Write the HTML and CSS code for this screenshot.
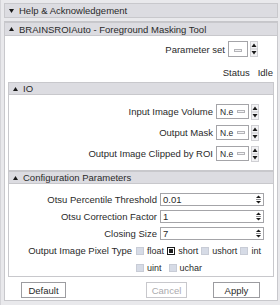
FILE: index.html
```html
<!DOCTYPE html>
<html>
<head>
	<title>BRAINSROIAuto</title>
<link rel="stylesheet" href="styles.css">
</head>
<body>
	<div class="frame">
		<div class="section collapsed">
			<div class="header">
				<svg class="arrow" width="5" height="4" viewBox="0 0 5 4"><path d="M0 0 L5 0 L2.5 4Z"/></svg>
				Help &amp; Acknowledgement
			</div>
		</div>
		<div class="section main">
			<div class="header">
				<svg class="arrow" width="5" height="4" viewBox="0 0 5 4"><path d="M0 4 L5 4 L2.5 0Z"/></svg>
				BRAINSROIAuto - Foreground Masking Tool
			</div>
			<div class="body">
				<div class="row param-row">
					<span class="label">Parameter set</span>
					<span class="combo small"><span class="dash"></span></span>
					<svg class="spin" width="8" height="16" viewBox="0 0 8 16"><rect x="0.5" y="0.5" width="7" height="15" fill="#f2f2f4" stroke="#d0d0d4"/><line x1="0" y1="8" x2="8" y2="8" stroke="#c8c8cc"/><path d="M1.5 6 L6.5 6 L4 2.5Z"/><path d="M1.5 10 L6.5 10 L4 13.5Z"/></svg>
				</div>
				<div class="row status-row">
					<span>Status</span><span class="idle">Idle</span>
				</div>

				<div class="section inner">
					<div class="header">
						<svg class="arrow" width="5" height="4" viewBox="0 0 5 4"><path d="M0 4 L5 4 L2.5 0Z"/></svg>
						IO
					</div>
					<div class="body io">
						<div class="row">
							<span class="label">Input Image Volume</span>
							<span class="combo"><span class="txt">N.e</span><span class="dash"></span></span>
							<svg class="spin" width="8" height="16" viewBox="0 0 8 16"><rect x="0.5" y="0.5" width="7" height="15" fill="#f2f2f4" stroke="#d0d0d4"/><line x1="0" y1="8" x2="8" y2="8" stroke="#c8c8cc"/><path d="M1.5 6 L6.5 6 L4 2.5Z"/><path d="M1.5 10 L6.5 10 L4 13.5Z"/></svg>
						</div>
						<div class="row">
							<span class="label">Output Mask</span>
							<span class="combo"><span class="txt">N.e</span><span class="dash"></span></span>
							<svg class="spin" width="8" height="16" viewBox="0 0 8 16"><rect x="0.5" y="0.5" width="7" height="15" fill="#f2f2f4" stroke="#d0d0d4"/><line x1="0" y1="8" x2="8" y2="8" stroke="#c8c8cc"/><path d="M1.5 6 L6.5 6 L4 2.5Z"/><path d="M1.5 10 L6.5 10 L4 13.5Z"/></svg>
						</div>
						<div class="row">
							<span class="label">Output Image Clipped by ROI</span>
							<span class="combo"><span class="txt">N.e</span><span class="dash"></span></span>
							<svg class="spin" width="8" height="16" viewBox="0 0 8 16"><rect x="0.5" y="0.5" width="7" height="15" fill="#f2f2f4" stroke="#d0d0d4"/><line x1="0" y1="8" x2="8" y2="8" stroke="#c8c8cc"/><path d="M1.5 6 L6.5 6 L4 2.5Z"/><path d="M1.5 10 L6.5 10 L4 13.5Z"/></svg>
						</div>
					</div>
				</div>

				<div class="section inner">
					<div class="header">
						<svg class="arrow" width="5" height="4" viewBox="0 0 5 4"><path d="M0 4 L5 4 L2.5 0Z"/></svg>
						Configuration Parameters
					</div>
					<div class="body config">
						<div class="field">
							<span class="label">Otsu Percentile Threshold</span>
							<span class="input"><span>0.01</span><svg class="mini-spin" width="5" height="9" viewBox="0 0 5 9"><path d="M0 3 L5 3 L2.5 0.5Z"/><line x1="0" y1="4.5" x2="5" y2="4.5" stroke="#909094"/><path d="M0 6 L5 6 L2.5 8.5Z"/></svg></span>
						</div>
						<div class="field">
							<span class="label">Otsu Correction Factor</span>
							<span class="input"><span>1</span><svg class="mini-spin" width="5" height="9" viewBox="0 0 5 9"><path d="M0 3 L5 3 L2.5 0.5Z"/><line x1="0" y1="4.5" x2="5" y2="4.5" stroke="#909094"/><path d="M0 6 L5 6 L2.5 8.5Z"/></svg></span>
						</div>
						<div class="field">
							<span class="label">Closing Size</span>
							<span class="input"><span>7</span><svg class="mini-spin" width="5" height="9" viewBox="0 0 5 9"><path d="M0 3 L5 3 L2.5 0.5Z"/><line x1="0" y1="4.5" x2="5" y2="4.5" stroke="#909094"/><path d="M0 6 L5 6 L2.5 8.5Z"/></svg></span>
						</div>
						<div class="pixel-type">
							<span class="pt-label">Output Image Pixel Type</span>
							<div class="choices">
								<div class="choice-row first">
									<span class="choice"><span class="box"></span>float</span>
									<span class="choice"><span class="box on"></span>short</span>
									<span class="choice"><span class="box"></span>ushort</span>
									<span class="choice"><span class="box"></span>int</span>
								</div>
								<div class="choice-row">
									<span class="choice"><span class="box"></span>uint</span>
									<span class="choice"><span class="box"></span>uchar</span>
								</div>
							</div>
						</div>
					</div>
				</div>

				<div class="buttons">
					<button class="btn default">Default</button>
					<button class="btn cancel">Cancel</button>
					<button class="btn apply">Apply</button>
				</div>
			</div>
		</div>
	</div>
</body>
</html>
```

FILE: styles.css
```css
* {
	box-sizing: border-box;
}

body {
	margin: 0;
	background: #e9e9ec;
	font-family: "Liberation Sans", Arial, sans-serif;
	font-size: 9.5px;
	color: #2a2a2a;
	overflow: hidden;
}

.frame {
	width: 280px;
	height: 305px;
	padding: 3px 0 0 3px;
	border-left: 1px solid #d4d4d8;
}

.frame > .section {
	width: 274px;
}

.header {
	display: flex;
	align-items: center;
	height: 14px;
	background: #dcdce1;
	border: 1px solid #c8c8cc;
	padding-left: 4px;
	white-space: nowrap;
}

.arrow {
	margin-right: 5px;
	fill: #1a1a1a;
}

.collapsed {
	height: 19px;
	border-bottom: 1px solid #c6c6ca;
}

.collapsed .header {
	height: 15px;
}

.main > .body {
	background: #ffffff;
	border: 1px solid #c8c8cc;
	border-top: none;
	height: 265px;
	padding: 5px 3px 0 3px;
}

.row {
	display: flex;
	justify-content: flex-end;
	align-items: center;
}

.param-row {
	height: 16px;
	padding-right: 16px;
}

.status-row {
	height: 11px;
	margin: 10px 0 4px 0;
	padding-right: 1px;
}

.status-row .idle {
	margin-left: 8px;
}

.label {
	margin-right: 3px;
}

.combo {
	display: flex;
	align-items: center;
	width: 33px;
	height: 15px;
	border: 1px solid #a4a4a8;
	background: #ffffff;
	padding-left: 3px;
	margin-right: 2px;
	font-size: 8.5px;
}

.combo.small {
	width: 20px;
	height: 16px;
	justify-content: center;
	padding-left: 0;
}

.combo .txt {
	flex: 1;
}

.dash {
	width: 8px;
	height: 3px;
	border: 1px solid #b4b4b8;
	background: #f4f4f6;
	margin-right: 3px;
}

.combo.small .dash {
	margin: 2px 0 0 0;
}

.spin {
	fill: #1a1a1a;
	flex-shrink: 0;
}

.inner .header {
	height: 13px;
}

.inner .body {
	border: 1px solid #c8c8cc;
	border-top: none;
	background: #ffffff;
}

.io {
	height: 76px;
	padding: 6px 14px 0 0;
}

.io .row {
	height: 21px;
}

.config {
	height: 93px;
	padding: 7px 9px 0 0;
}

.field {
	display: flex;
	align-items: center;
	height: 17px;
}

.field .label {
	width: 148px;
	text-align: right;
	margin-right: 3px;
	flex-shrink: 0;
}

.input {
	flex: 1;
	display: flex;
	justify-content: space-between;
	align-items: center;
	height: 13px;
	border: 1px solid #a4a4a8;
	padding-left: 2px;
}

.mini-spin {
	fill: #1a1a1a;
	margin-right: 2px;
}

.pixel-type {
	display: flex;
}

.pt-label {
	flex: 1;
	text-align: right;
	height: 17px;
	line-height: 17px;
	margin-right: 4px;
	white-space: nowrap;
}

.choices {
	width: 128px;
	flex-shrink: 0;
	font-size: 9px;
}

.choice-row {
	display: flex;
	align-items: center;
	height: 17px;
	gap: 7px;
}

.choice-row.first {
	justify-content: space-between;
	padding-right: 3px;
	gap: 0;
}

.choice {
	display: flex;
	align-items: center;
}

.box {
	width: 8px;
	height: 8px;
	background: #d6dbe6;
	border: 1px solid #c8ccd6;
	margin-right: 3px;
}

.box.on {
	background: #1e1e1e;
	border: 1px solid #1e1e1e;
	box-shadow: inset 0 0 0 1px #ffffff;
}

.buttons {
	display: flex;
	padding: 5px 0 0 13px;
}

.btn {
	font-family: "Liberation Sans", Arial, sans-serif;
	font-size: 9.5px;
	height: 16px;
	background: #ffffff;
	border: 1px solid #9c9ca0;
	padding: 0;
	color: #2a2a2a;
}

.default {
	width: 45px;
}

.cancel {
	width: 41px;
	margin-left: 80px;
	color: #aaaaae;
	border-color: #c8c8cc;
}

.apply {
	width: 47px;
	margin-left: 26px;
}
```
